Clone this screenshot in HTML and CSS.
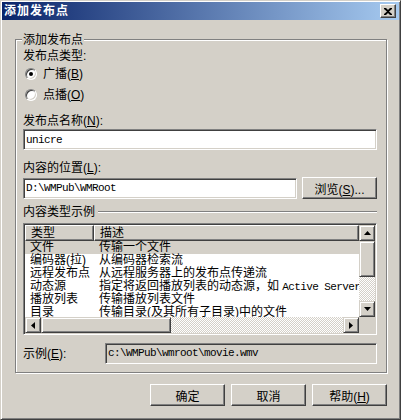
FILE: index.html
```html
<!DOCTYPE html>
<html lang="zh-CN">
<head>
  <meta charset="UTF-8" />
  <title>添加发布点</title>
  <link rel="stylesheet" href="styles.css">
</head>
<body>

  <div class="window">
    <div class="titlebar">
      <span class="title">添加发布点</span>
      <button class="close-btn" aria-label="关闭">
        <svg width="8" height="7" viewBox="0 0 8 7"><path d="M0 0h2l2 2 2-2h2v1L5 3.5 8 6v1H6L4 5 2 7H0V6l3-2.5L0 1z" fill="#000"/></svg>
      </button>
    </div>

    <div class="dialog-body">
      <div class="group">
        <span class="group-title">添加发布点</span>

        <div class="label">发布点类型:</div>
        <label class="radio first"><span class="radio-mark checked"></span><span>广播(<u>B</u>)</span></label>
        <label class="radio second"><span class="radio-mark"></span><span>点播(<u>O</u>)</span></label>

        <div class="label name-label">发布点名称(<u>N</u>):</div>
        <input class="field" type="text" value="unicre" />

        <div class="label path-label">内容的位置(<u>L</u>):</div>
        <div class="path-row">
          <input class="field" type="text" value="D:\WMPub\WMRoot" />
          <button class="btn">浏览(<u>S</u>)...</button>
        </div>

        <div class="section-title">
          <span>内容类型示例</span>
          <div class="etched-line"></div>
        </div>

        <div class="listbox">
          <div class="list-view">
            <div class="list-head">
              <span class="col-type">类型</span>
              <span class="col-desc">描述</span>
            </div>
            <div class="list-row selected"><span class="col-type">文件</span><span class="col-desc">传输一个文件</span></div>
            <div class="list-row"><span class="col-type">编码器(拉)</span><span class="col-desc">从编码器检索流</span></div>
            <div class="list-row"><span class="col-type">远程发布点</span><span class="col-desc">从远程服务器上的发布点传递流</span></div>
            <div class="list-row"><span class="col-type">动态源</span><span class="col-desc">指定将返回播放列表的动态源，如 <span class="mono">Active Server Pages</span></span></div>
            <div class="list-row"><span class="col-type">播放列表</span><span class="col-desc">传输播放列表文件</span></div>
            <div class="list-row"><span class="col-type">目录</span><span class="col-desc">传输目录(及其所有子目录)中的文件</span></div>
          </div>

          <div class="vscroll">
            <div class="sb-btn"><svg width="7" height="4" viewBox="0 0 7 4"><polygon points="3.5,0 7,4 0,4" fill="#000"/></svg></div>
            <div class="sb-thumb v"></div>
            <div class="sb-track"></div>
            <div class="sb-btn"><svg width="7" height="4" viewBox="0 0 7 4"><polygon points="0,0 7,0 3.5,4" fill="#000"/></svg></div>
          </div>
          <div class="hscroll">
            <div class="sb-btn"><svg width="4" height="7" viewBox="0 0 4 7"><polygon points="4,0 4,7 0,3.5" fill="#000"/></svg></div>
            <div class="sb-thumb h"></div>
            <div class="sb-track"></div>
            <div class="sb-btn"><svg width="4" height="7" viewBox="0 0 4 7"><polygon points="0,0 4,3.5 0,7" fill="#000"/></svg></div>
          </div>
          <div class="sb-corner"></div>
        </div>

        <div class="sample-row">
          <span class="sample-label">示例(<u>E</u>):</span>
          <div class="sample-field">c:\WMPub\wmroot\movie.wmv</div>
        </div>
      </div>

      <div class="button-row">
        <button class="btn">确定</button>
        <button class="btn">取消</button>
        <button class="btn">帮助(<u>H</u>)</button>
      </div>
    </div>
  </div>

</body>
</html>
```

FILE: styles.css
```css
body {
  margin: 0;
  background: #d4d0c8;
  font-family: "Liberation Sans", "Noto Sans CJK SC", sans-serif;
  font-size: 12px;
  line-height: 14px;
  color: #000;
}

u {
  text-decoration: underline;
  text-underline-offset: 1px;
}

.window {
  width: 401px;
  height: 420px;
  box-sizing: border-box;
  padding: 1px;
  border: 1px solid;
  border-color: #d4d0c8 #404040 #404040 #d4d0c8;
  box-shadow: inset 1px 1px 0 #fff, inset -1px -1px 0 #808080;
  background: #d4d0c8;
}

.titlebar {
  height: 18px;
  display: flex;
  align-items: center;
  justify-content: space-between;
  padding: 0 3px 0 2px;
  background: linear-gradient(to right, #0a246a, #a6caf0);
}

.title {
  color: #fff;
  font-weight: bold;
  letter-spacing: 1px;
}

.close-btn {
  width: 16px;
  height: 14px;
  padding: 0;
  display: flex;
  align-items: center;
  justify-content: center;
  background: #d4d0c8;
  border: 1px solid;
  border-color: #fff #404040 #404040 #fff;
  box-shadow: inset -1px -1px 0 #808080;
}

.dialog-body {
  padding: 19px 12px 0 13px;
}

/* group box */
.group {
  position: relative;
  border: 1px solid #808080;
  box-shadow: inset 1px 1px 0 #fff, 1px 1px 0 #fff;
  padding: 9px 9px 8px 7px;
}

.group-title {
  position: absolute;
  top: -7px;
  left: 6px;
  padding: 0 1px;
  background: #d4d0c8;
}

.label {
  height: 14px;
}

.radio {
  display: flex;
  align-items: center;
  height: 14px;
  padding-left: 2px;
  gap: 6px;
}

.radio.first { margin-top: 4px; }
.radio.second { margin-top: 7px; }

.radio-mark {
  width: 12px;
  height: 12px;
  box-sizing: border-box;
  border-radius: 50%;
  background: #fff;
  border: 1px solid;
  border-color: #808080 #fff #fff #808080;
  box-shadow: inset 1px 1px 0 #404040, inset -1px -1px 0 #d4d0c8;
  display: flex;
  align-items: center;
  justify-content: center;
}

.radio-mark.checked::after {
  content: "";
  width: 4px;
  height: 4px;
  border-radius: 50%;
  background: #000;
}

.name-label { margin-top: 12px; }
.path-label { margin-top: 11px; }

.field {
  display: block;
  width: 100%;
  height: 21px;
  box-sizing: border-box;
  margin: 1px 0 0;
  padding: 0 2px;
  border: 1px solid;
  border-color: #808080 #fff #fff #808080;
  box-shadow: inset 1px 1px 0 #404040, inset -1px -1px 0 #d4d0c8;
  background: #fff;
  font-family: "Liberation Mono", monospace;
  font-size: 11px;
  letter-spacing: -0.6px;
  outline: none;
}

.path-row {
  display: flex;
  align-items: center;
  gap: 5px;
  margin-top: 2px;
}

.path-row .field {
  flex: 1;
  margin: 0;
}

.btn {
  width: 75px;
  height: 22px;
  padding: 0;
  background: #d4d0c8;
  border: 1px solid;
  border-color: #fff #404040 #404040 #fff;
  box-shadow: inset -1px -1px 0 #808080;
  font-family: inherit;
  font-size: 12px;
  color: #000;
}

.section-title {
  display: flex;
  align-items: center;
  gap: 3px;
  margin-top: 6px;
}

.etched-line {
  flex: 1;
  border-top: 1px solid #808080;
  border-bottom: 1px solid #fff;
}

/* list view */
.listbox {
  margin-top: 4px;
  height: 112px;
  box-sizing: border-box;
  border: 1px solid;
  border-color: #808080 #fff #fff #808080;
  box-shadow: inset 1px 1px 0 #404040, inset -1px -1px 0 #d4d0c8;
  padding: 1px;
  display: grid;
  grid-template-columns: 1fr 16px;
  grid-template-rows: 1fr 16px;
  background: #fff;
}

.list-view {
  overflow: hidden;
  white-space: nowrap;
}

.list-head {
  display: flex;
  height: 16px;
}

.list-head span {
  box-sizing: border-box;
  height: 16px;
  line-height: 14px;
  background: #d4d0c8;
  border: 1px solid;
  border-color: #fff #404040 #404040 #fff;
  box-shadow: inset -1px -1px 0 #808080;
}

.list-head .col-desc {
  flex: 1;
}

.col-type {
  width: 69px;
  flex: none;
  padding-left: 5px;
  box-sizing: border-box;
}

.col-desc {
  padding-left: 5px;
}

.list-row {
  display: flex;
  height: 13px;
  line-height: 13px;
}

.list-row.selected {
  background: #d4d0c8;
}

.mono {
  font-family: "Liberation Mono", monospace;
  font-size: 11px;
  letter-spacing: -0.6px;
}

.vscroll {
  display: flex;
  flex-direction: column;
}

.hscroll {
  display: flex;
}

.sb-btn,
.sb-thumb {
  box-sizing: border-box;
  background: #d4d0c8;
  border: 1px solid;
  border-color: #d4d0c8 #404040 #404040 #d4d0c8;
  box-shadow: inset 1px 1px 0 #fff, inset -1px -1px 0 #808080;
}

.sb-btn {
  width: 16px;
  height: 16px;
  flex: none;
  display: flex;
  align-items: center;
  justify-content: center;
}

.sb-thumb.v {
  height: 36px;
  flex: none;
}

.sb-thumb.h {
  width: 130px;
  flex: none;
}

.sb-track {
  flex: 1;
  background-image: repeating-conic-gradient(#d4d0c8 0 25%, #fff 0 50%);
  background-size: 2px 2px;
}

.sb-corner {
  background: #d4d0c8;
}

/* sample */
.sample-row {
  display: flex;
  align-items: center;
  margin-top: 8px;
}

.sample-label {
  width: 82px;
  flex: none;
}

.sample-field {
  flex: 1;
  height: 21px;
  box-sizing: border-box;
  padding: 0 2px;
  line-height: 19px;
  border: 1px solid;
  border-color: #808080 #fff #fff #808080;
  box-shadow: inset 1px 1px 0 #404040, inset -1px -1px 0 #d4d0c8;
  font-family: "Liberation Mono", monospace;
  font-size: 11px;
  letter-spacing: -0.6px;
}

.button-row {
  display: flex;
  justify-content: flex-end;
  gap: 6px;
  margin-top: 11px;
}
```
